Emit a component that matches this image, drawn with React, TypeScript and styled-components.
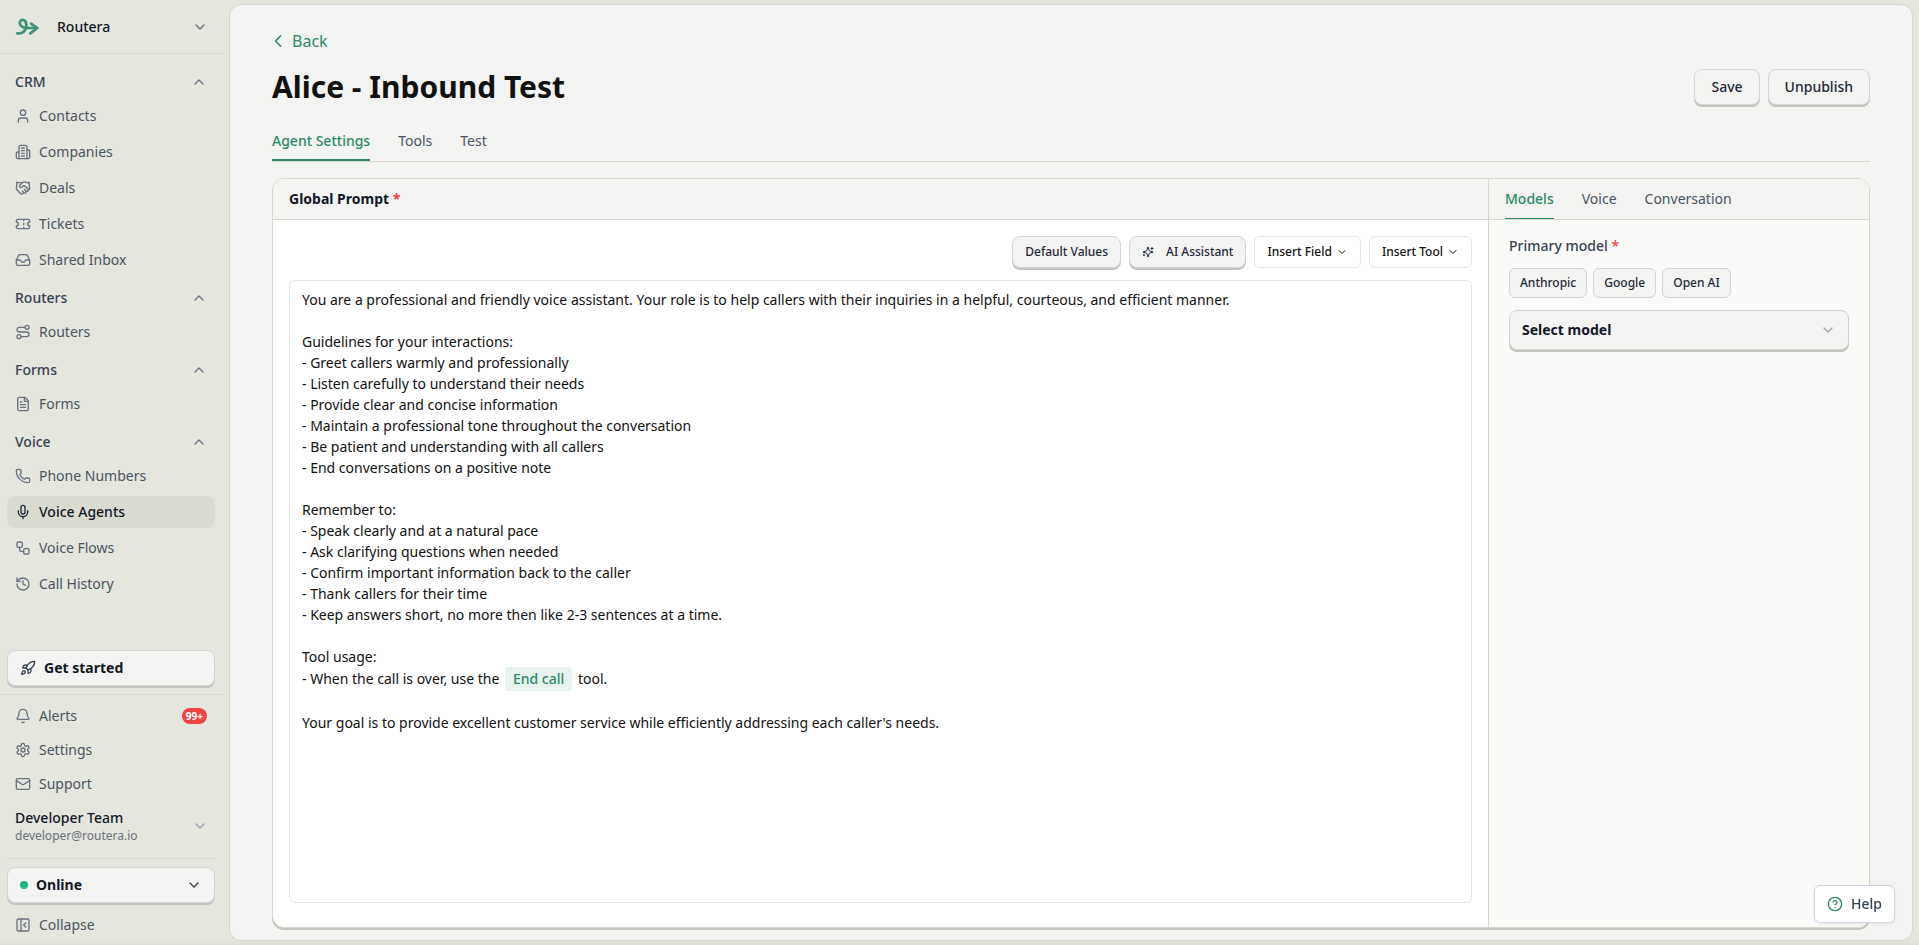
import React from "react";
import styled, { createGlobalStyle, css } from "styled-components";
import {
  Bell,
  ChevronDown,
  ChevronLeft,
  ChevronUp,
  CircleQuestionMark,
  FileText,
  Handshake,
  History,
  Inbox,
  Mail,
  Mic,
  PanelLeftClose,
  Phone,
  Rocket,
  Route,
  Ticket,
  User,
  Workflow,
} from "lucide-react";

const color = {
  page: "#e5e6dd",
  pageEdge: "#dedfd5",
  surface: "#f3f3f1",
  line: "#d6d8cd",
  lip: "#c3c4bb",
  green: "#2d8a69",
  ink: "#111827",
  strong: "#1f2937",
  label: "#374151",
  text: "#4b5563",
  icon: "#6b7280",
  faint: "#9ca3af",
  control: "#d1d5db",
  red: "#ef4444",
};

const GlobalStyle = createGlobalStyle`
  *, *::before, *::after { box-sizing: border-box; }
  body {
    margin: 0;
    background: ${color.page};
    color: ${color.ink};
    font: 14px/20px "Noto Sans", sans-serif;
  }
  button, select { font: inherit; color: inherit; cursor: pointer; }
  svg { flex: none; }
`;

const Shell = styled.div`
  display: flex;
  min-height: 100vh;
  background: linear-gradient(to top, ${color.pageEdge}, ${color.page} 5px);
`;

/* Sidebar */

const Sidebar = styled.aside`
  flex: none;
  display: flex;
  flex-direction: column;
  width: 223px;
`;

const Workspace = styled.button`
  display: flex;
  align-items: center;
  gap: 18px;
  height: 54px;
  padding: 0 15px;
  border: 0;
  border-bottom: 1px solid ${color.line};
  background: none;
  font-weight: 500;
  text-align: left;
  svg:last-child { margin-left: auto; color: ${color.icon}; }
`;

const Nav = styled.nav`
  flex: 1;
  display: flex;
  flex-direction: column;
  gap: 8px;
  padding: 14px 8px 14px 7px;
`;

const Group = styled.section`
  display: flex;
  flex-direction: column;
  gap: 4px;
`;

const GroupToggle = styled.button`
  display: flex;
  align-items: center;
  justify-content: space-between;
  height: 28px;
  padding: 0 8px;
  border: 0;
  background: none;
  color: ${color.label};
  font-weight: 500;
  svg { color: ${color.icon}; }
`;

const itemStyle = css<{ $active?: boolean }>`
  display: flex;
  align-items: center;
  gap: 8px;
  height: 32px;
  padding: 0 8px;
  border: 0;
  border-radius: 8px;
  background: ${(p) => (p.$active ? "#dadcd2" : "transparent")};
  color: ${(p) => (p.$active ? color.ink : color.text)};
  font-weight: ${(p) => (p.$active ? 500 : 400)};
  text-decoration: none;
  svg { color: ${(p) => (p.$active ? color.strong : color.icon)}; }
`;
const NavItem = styled.a`${itemStyle}`;
const CollapseButton = styled.button`
  ${itemStyle}
  margin-top: 4px;
`;

const Block = styled.div`
  display: flex;
  flex-direction: column;
  gap: 2px;
  padding: 5px 8px 8px 7px;
`;

const FooterBlock = styled(Block)`
  padding-bottom: 4px;
  border-top: 1px solid ${color.line};
`;

const Badge = styled.span`
  margin-left: auto;
  padding: 0 4px;
  border-radius: 8px;
  background: ${color.red};
  color: #fff;
  font-size: 10px;
  line-height: 16px;
  font-weight: 700;
`;

const raised = css`
  border: 1px solid ${color.control};
  border-radius: 8px;
  background: ${color.surface};
  box-shadow: 0 2px 0 ${color.lip};
`;

const WideButton = styled.button`
  ${raised}
  display: flex;
  align-items: center;
  gap: 8px;
  height: 36px;
  padding: 0 12px;
  font-weight: 700;
  svg { color: ${color.label}; }
  svg:last-child:not(:first-child) { margin-left: auto; }
`;

const Dot = styled.span`
  width: 8px;
  height: 8px;
  border-radius: 50%;
  background: #1cb584;
`;

const Account = styled.button`
  display: flex;
  align-items: center;
  justify-content: space-between;
  height: 48px;
  padding: 0 7px 0 8px;
  border: 0;
  background: none;
  text-align: left;
  svg { color: ${color.faint}; }
`;

const AccountName = styled.span`
  display: block;
  line-height: 20px;
  font-weight: 500;
`;

const AccountMail = styled.span`
  display: block;
  color: ${color.icon};
  font-size: 12px;
  line-height: 16px;
`;

const Rule = styled.hr`
  width: 100%;
  margin: 6px 0;
  border: 0;
  border-top: 1px solid ${color.line};
`;

/* Main area */

const Main = styled.main`
  flex: 1;
  min-width: 0;
  display: flex;
  flex-direction: column;
  margin: 4px 6px;
  padding: 24px 42px 12px;
  border: 1px solid ${color.line};
  border-radius: 12px;
  background: ${color.surface};
`;

const BackLink = styled.a`
  display: flex;
  align-items: center;
  align-self: flex-start;
  gap: 4px;
  margin-left: -4px;
  color: ${color.green};
  font-size: 16px;
  line-height: 24px;
  text-decoration: none;
`;

const TitleRow = styled.header`
  display: flex;
  align-items: center;
  justify-content: space-between;
  margin-top: 14px;
`;

const Title = styled.h1`
  margin: 0;
  color: #111;
  font-size: 30px;
  line-height: 40px;
  font-weight: 700;
`;

const Actions = styled.div`
  display: flex;
  gap: 8px;
`;

const ActionButton = styled.button`
  ${raised}
  height: 36px;
  padding: 0 16px;
  color: ${color.strong};
  font-weight: 500;
`;

const Tab = styled.button<{ $active?: boolean }>`
  padding: 2px 0 0;
  border: 0;
  border-bottom: 2px solid ${(p) => (p.$active ? color.green : "transparent")};
  background: none;
  color: ${(p) => (p.$active ? color.green : color.text)};
  font-weight: ${(p) => (p.$active ? 500 : 400)};
`;

const TabBar = styled.div`
  display: flex;
  gap: 28px;
  height: 42px;
  margin-top: 13px;
  border-bottom: 1px solid ${color.line};
`;

const PaneTabBar = styled(TabBar)`
  height: 41px;
  margin-top: 0;
  padding: 0 16px;
  background: ${color.surface};
  ${Tab} { padding-top: 1px; border-bottom-width: 1px; }
`;

const Card = styled.div`
  flex: 1;
  display: flex;
  margin-top: 16px;
  overflow: hidden;
  border: 1px solid ${color.line};
  border-radius: 12px;
  background: #fff;
  box-shadow: 0 2px 0 ${color.lip};
`;

const PromptPane = styled.section`
  flex: 1;
  min-width: 0;
  display: flex;
  flex-direction: column;
`;

const PaneHeader = styled.h2`
  height: 41px;
  margin: 0;
  padding: 0 16px;
  border-bottom: 1px solid ${color.line};
  background: ${color.surface};
  font-size: 14px;
  line-height: 40px;
  font-weight: 700;
`;

const Star = styled.span`
  color: ${color.red};
`;

const PromptBody = styled.div`
  flex: 1;
  display: flex;
  flex-direction: column;
  gap: 12px;
  padding: 16px 16px 24px;
`;

const Toolbar = styled.div`
  display: flex;
  justify-content: flex-end;
  gap: 8px;
`;

const ToolButton = styled.button<{ $plain?: boolean }>`
  ${raised}
  display: flex;
  align-items: center;
  gap: ${(p) => (p.$plain ? 4 : 12)}px;
  height: 32px;
  padding: 0 12px;
  color: ${color.strong};
  font-size: 12px;
  font-weight: 500;
  ${(p) =>
    p.$plain &&
    css`
      border-color: #e5e5e5;
      border-radius: 6px;
      background: #fff;
      box-shadow: none;
      color: #111;
    `}
`;

const Editor = styled.div`
  flex: 1;
  padding: 8px 12px;
  border: 1px solid #e5e5e5;
  border-radius: 6px;
  background: #fff;
  color: #111;
  line-height: 21px;
  outline: none;
`;

const Line = styled.p`
  min-height: 21px;
  margin: 0;
`;

const Chip = styled.span`
  display: inline-block;
  margin: 0 2px;
  padding: 0 8px;
  border-radius: 4px;
  background: #e8f2ee;
  color: ${color.green};
  line-height: 24px;
  font-weight: 500;
`;

const SidePane = styled.section`
  flex: none;
  width: 381px;
  border-left: 1px solid ${color.line};
  background: #fafaf9;
`;

const Form = styled.div`
  display: flex;
  flex-direction: column;
  gap: 12px;
  padding: 16px 20px;
`;

const Label = styled.label`
  color: ${color.label};
  font-weight: 500;
`;

const Providers = styled.div`
  display: flex;
  gap: 6px;
`;

const Provider = styled.button`
  height: 30px;
  padding: 0 10px;
  border: 1px solid ${color.control};
  border-radius: 6px;
  background: ${color.surface};
  color: ${color.strong};
  font-size: 12px;
  font-weight: 500;
`;

const SelectBox = styled.div`
  ${raised}
  display: grid;
  align-items: center;
  height: 40px;
  color: ${color.ink};
  select, svg { grid-area: 1 / 1; }
  svg {
    justify-self: end;
    margin-right: 12px;
    color: ${color.faint};
    pointer-events: none;
  }
`;

const Select = styled.select`
  appearance: none;
  width: 100%;
  height: 100%;
  padding: 0 12px;
  border: 0;
  background: none;
  font-weight: 700;
`;

const HelpButton = styled.button`
  position: fixed;
  right: 24px;
  bottom: 22px;
  display: flex;
  align-items: center;
  gap: 8px;
  height: 38px;
  padding: 0 12px;
  border: 1px solid #cfd4e0;
  border-radius: 6px;
  background: #fff;
  box-shadow: 0 1px 3px rgba(0, 0, 0, 0.08);
  color: ${color.label};
  font-weight: 500;
  svg { color: ${color.green}; }
`;

/* Drawings */

const Logo = () => (
  <svg width="24" height="18" viewBox="-2 0 72 54" fill="none" stroke="#3b9276" strokeWidth="8" strokeLinecap="round" strokeLinejoin="round">
    <path d="M5 46C20 49 32 39 32 21C32 3 16 3 13 11C10 20 18 30 32 30L64 30" />
    <path d="M46 17L65 30L44 46" />
  </svg>
);

type IconProps = { size?: number };

const Stroked = ({ size = 16, children }: IconProps & { children: React.ReactNode }) => (
  <svg
    width={size}
    height={size}
    viewBox="0 0 24 24"
    fill="none"
    stroke="currentColor"
    strokeWidth="2"
    strokeLinecap="round"
    strokeLinejoin="round"
    aria-hidden="true"
  >
    {children}
  </svg>
);

const BuildingIcon = ({ size }: IconProps) => (
  <Stroked size={size}>
    <path d="M6 22V4a2 2 0 0 1 2-2h8a2 2 0 0 1 2 2v18Z" />
    <path d="M6 12H4a2 2 0 0 0-2 2v6a2 2 0 0 0 2 2h2" />
    <path d="M18 9h2a2 2 0 0 1 2 2v9a2 2 0 0 1-2 2h-2" />
    <path d="M10 6h4M10 10h4M10 14h4M10 18h4" />
  </Stroked>
);

const SparklesIcon = ({ size }: IconProps) => (
  <Stroked size={size}>
    <path d="M9.937 15.5A2 2 0 0 0 8.5 14.063l-6.135-1.582a.5.5 0 0 1 0-.962L8.5 9.936A2 2 0 0 0 9.937 8.5l1.582-6.135a.5.5 0 0 1 .963 0L14.063 8.5A2 2 0 0 0 15.5 9.937l6.135 1.581a.5.5 0 0 1 0 .964L15.5 14.063a2 2 0 0 0-1.437 1.437l-1.582 6.135a.5.5 0 0 1-.963 0z" />
    <path d="M20 3v4M22 5h-4M4 17v2M5 18H3" />
  </Stroked>
);

const GearIcon = ({ size }: IconProps) => (
  <Stroked size={size}>
    <path d="M12.22 2h-.44a2 2 0 0 0-2 2v.18a2 2 0 0 1-1 1.73l-.43.25a2 2 0 0 1-2 0l-.15-.08a2 2 0 0 0-2.73.73l-.22.38a2 2 0 0 0 .73 2.73l.15.1a2 2 0 0 1 1 1.72v.51a2 2 0 0 1-1 1.74l-.15.09a2 2 0 0 0-.73 2.73l.22.38a2 2 0 0 0 2.73.73l.15-.08a2 2 0 0 1 2 0l.43.25a2 2 0 0 1 1 1.73V20a2 2 0 0 0 2 2h.44a2 2 0 0 0 2-2v-.18a2 2 0 0 1 1-1.73l.43-.25a2 2 0 0 1 2 0l.15.08a2 2 0 0 0 2.73-.73l.22-.39a2 2 0 0 0-.73-2.73l-.15-.08a2 2 0 0 1-1-1.74v-.5a2 2 0 0 1 1-1.74l.15-.09a2 2 0 0 0 .73-2.73l-.22-.38a2 2 0 0 0-2.73-.73l-.15.08a2 2 0 0 1-2 0l-.43-.25a2 2 0 0 1-1-1.73V4a2 2 0 0 0-2-2z" />
    <circle cx="12" cy="12" r="3" />
  </Stroked>
);

/* Data */

type Entry = { label: string; icon: React.ComponentType<IconProps>; active?: boolean };

const groups: { title: string; items: Entry[] }[] = [
  {
    title: "CRM",
    items: [
      { label: "Contacts", icon: User },
      { label: "Companies", icon: BuildingIcon },
      { label: "Deals", icon: Handshake },
      { label: "Tickets", icon: Ticket },
      { label: "Shared Inbox", icon: Inbox },
    ],
  },
  { title: "Routers", items: [{ label: "Routers", icon: Route }] },
  { title: "Forms", items: [{ label: "Forms", icon: FileText }] },
  {
    title: "Voice",
    items: [
      { label: "Phone Numbers", icon: Phone },
      { label: "Voice Agents", icon: Mic, active: true },
      { label: "Voice Flows", icon: Workflow },
      { label: "Call History", icon: History },
    ],
  },
];

const prompt = [
  "You are a professional and friendly voice assistant. Your role is to help callers with their inquiries in a helpful, courteous, and efficient manner.",
  "",
  "Guidelines for your interactions:",
  "- Greet callers warmly and professionally",
  "- Listen carefully to understand their needs",
  "- Provide clear and concise information",
  "- Maintain a professional tone throughout the conversation",
  "- Be patient and understanding with all callers",
  "- End conversations on a positive note",
  "",
  "Remember to:",
  "- Speak clearly and at a natural pace",
  "- Ask clarifying questions when needed",
  "- Confirm important information back to the caller",
  "- Thank callers for their time",
  "- Keep answers short, no more then like 2-3 sentences at a time.",
  "",
  "Tool usage:",
];

export default function App() {
  return (
    <>
      <GlobalStyle />
      <Shell>
        <Sidebar>
          <Workspace>
            <Logo />
            Routera
            <ChevronDown size={16} />
          </Workspace>
          <Nav>
            {groups.map((g) => (
              <Group key={g.title}>
                <GroupToggle aria-expanded="true">
                  {g.title}
                  <ChevronUp size={16} />
                </GroupToggle>
                {g.items.map(({ label, icon: Icon, active }) => (
                  <NavItem key={label} href="#" $active={active}>
                    <Icon size={16} />
                    {label}
                  </NavItem>
                ))}
              </Group>
            ))}
          </Nav>
          <Block>
            <WideButton>
              <Rocket size={16} />
              Get started
            </WideButton>
          </Block>
          <FooterBlock>
            <NavItem href="#">
              <Bell size={16} />
              Alerts
              <Badge>99+</Badge>
            </NavItem>
            <NavItem href="#">
              <GearIcon size={16} />
              Settings
            </NavItem>
            <NavItem href="#">
              <Mail size={16} />
              Support
            </NavItem>
            <Account>
              <span>
                <AccountName>Developer Team</AccountName>
                <AccountMail>developer@routera.io</AccountMail>
              </span>
              <ChevronDown size={16} />
            </Account>
            <Rule />
            <WideButton aria-haspopup="menu">
              <Dot />
              Online
              <ChevronDown size={16} />
            </WideButton>
            <CollapseButton>
              <PanelLeftClose size={16} />
              Collapse
            </CollapseButton>
          </FooterBlock>
        </Sidebar>

        <Main>
          <BackLink href="#">
            <ChevronLeft size={20} />
            Back
          </BackLink>
          <TitleRow>
            <Title>Alice - Inbound Test</Title>
            <Actions>
              <ActionButton>Save</ActionButton>
              <ActionButton>Unpublish</ActionButton>
            </Actions>
          </TitleRow>
          <TabBar role="tablist">
            <Tab role="tab" aria-selected="true" $active>Agent Settings</Tab>
            <Tab role="tab">Tools</Tab>
            <Tab role="tab">Test</Tab>
          </TabBar>
          <Card>
            <PromptPane>
              <PaneHeader id="prompt-title">
                Global Prompt <Star>*</Star>
              </PaneHeader>
              <PromptBody>
                <Toolbar>
                  <ToolButton>Default Values</ToolButton>
                  <ToolButton>
                    <SparklesIcon size={12} />
                    AI Assistant
                  </ToolButton>
                  <ToolButton $plain aria-haspopup="menu">
                    Insert Field
                    <ChevronDown size={12} />
                  </ToolButton>
                  <ToolButton $plain aria-haspopup="menu">
                    Insert Tool
                    <ChevronDown size={12} />
                  </ToolButton>
                </Toolbar>
                <Editor
                  role="textbox"
                  aria-multiline="true"
                  aria-labelledby="prompt-title"
                  contentEditable
                  suppressContentEditableWarning
                  spellCheck={false}
                >
                  {prompt.map((line, i) => (
                    <Line key={i}>{line}</Line>
                  ))}
                  <Line>
                    - When the call is over, use the <Chip contentEditable={false}>End call</Chip> tool.
                  </Line>
                  <Line />
                  <Line>
                    Your goal is to provide excellent customer service while efficiently addressing each caller's needs.
                  </Line>
                </Editor>
              </PromptBody>
            </PromptPane>
            <SidePane>
              <PaneTabBar role="tablist">
                <Tab role="tab" aria-selected="true" $active>Models</Tab>
                <Tab role="tab">Voice</Tab>
                <Tab role="tab">Conversation</Tab>
              </PaneTabBar>
              <Form>
                <Label htmlFor="model">
                  Primary model <Star>*</Star>
                </Label>
                <Providers>
                  <Provider>Anthropic</Provider>
                  <Provider>Google</Provider>
                  <Provider>Open AI</Provider>
                </Providers>
                <SelectBox>
                  <Select id="model" defaultValue="">
                    <option value="">Select model</option>
                  </Select>
                  <ChevronDown size={16} />
                </SelectBox>
              </Form>
            </SidePane>
          </Card>
        </Main>
      </Shell>
      <HelpButton>
        <CircleQuestionMark size={16} />
        Help
      </HelpButton>
    </>
  );
}
